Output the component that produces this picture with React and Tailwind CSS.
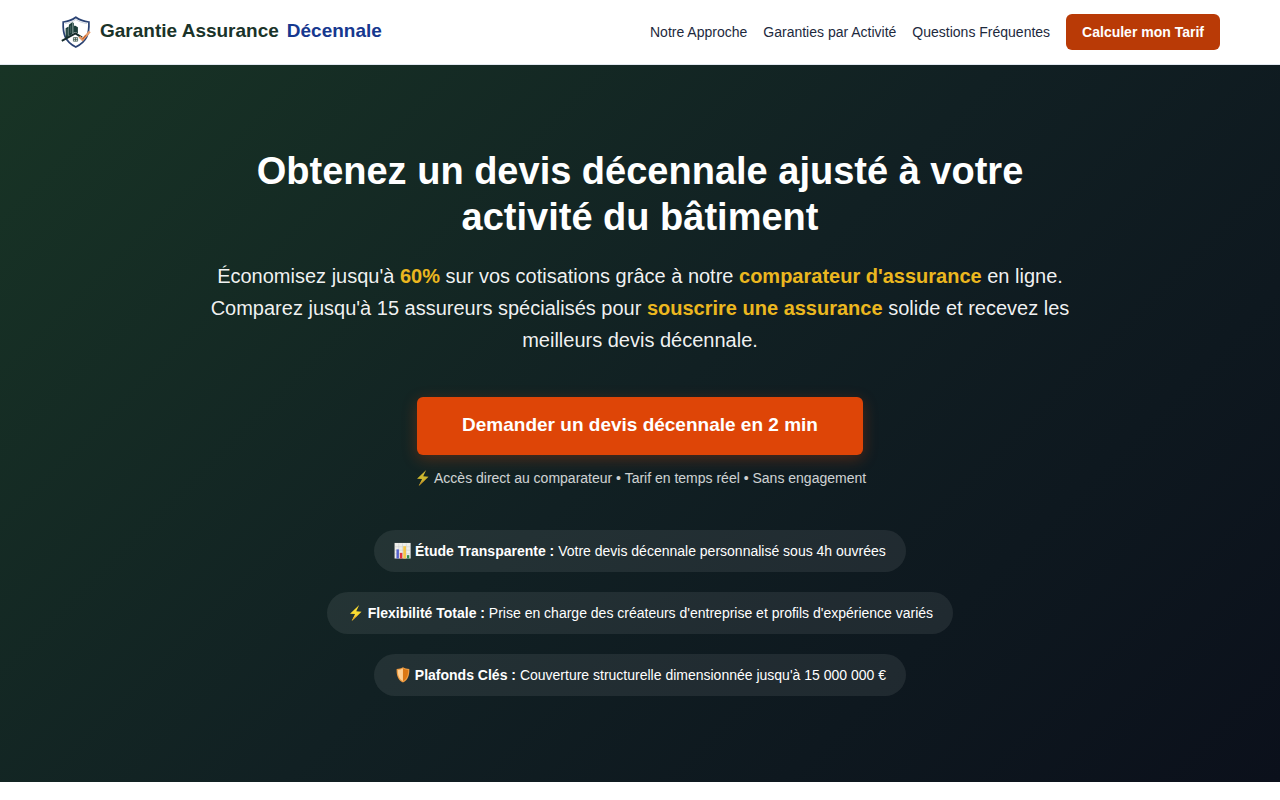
import React from "react";

const navLinks = [
  { label: "Notre Approche", href: "#approche" },
  { label: "Garanties par Activité", href: "#garanties" },
  { label: "Questions Fréquentes", href: "#faq" },
];

const Logo = () => (
  <svg viewBox="0 0 32 32" className="h-8 w-8" aria-hidden="true">
    {/* shield */}
    <path d="M15.800 1.300C12 4.200 8 5.600 3.200 6c-.3 7 .2 10.800 2 14.800 2 4.500 5.600 7.600 10.600 10.200 5-2.600 8.800-5.700 10.900-10.200 1.900-4 2.500-7.800 2.200-14.800C24 5.600 19.800 4.200 15.800 1.300Z" fill="#fff" stroke="#2a4273" strokeWidth="1.700" />
    <path d="M15.800 3.600C12.500 5.800 9 7 5.100 7.500M15.800 3.600c3.400 2.200 7 3.400 11.200 3.900" fill="none" stroke="#a9b7c8" strokeWidth="0.600" />
    {/* towers */}
    <path d="M5.600 12.300l3-1.700v9.600l-3 2ZM8.900 8.800l3.600-2.900v12l-3.600 2.200ZM13.300 10.800l1.600-1.300 3 1.800v6.100l-2.400-1.500-2.200 1.200Z" fill="#1b3d39" />
    <path d="M12.500 5.900l1.500 1.300v9l-1.500 1Z" fill="#45655f" />
    <path d="M7.100 13v6.500M10.700 9.500v7.500" stroke="#6b8781" strokeWidth="0.500" />
    {/* roof and window */}
    <path d="M1.800 24.800 15.400 17.400l6.800 4.300" fill="none" stroke="#142a29" strokeWidth="2" />
    <path d="M13.400 21.600h4.200v3.600h-4.200ZM15.500 21.600v3.600M13.400 23.400h4.200" fill="#e5e8de" stroke="#2c4b42" strokeWidth="0.700" />
    {/* check mark */}
    <path d="M19.300 20.700l3.200 3 7.300-8.200" fill="none" stroke="#e59a68" strokeWidth="2.400" />
    <path d="M22.500 23l3.300-3.700" stroke="#cc6329" strokeWidth="1.200" />
  </svg>
);

const ChartIcon = () => (
  <svg viewBox="0 0 18 18" className="-mt-1 inline-block size-[17px]" aria-hidden="true">
    <rect x="0.600" y="1" width="17" height="16.500" fill="#eeeeea" />
    <path d="M1 5h16M1 8.700h16M1 12.400h16M5 1.500v15M9 1.500v15M13 1.500v15" stroke="#c3c9c9" strokeWidth="0.500" />
    <rect x="2.600" y="7.800" width="2.600" height="9.700" fill="#5360cb" />
    <rect x="6.200" y="11.500" width="2.600" height="6" fill="#df3340" />
    <rect x="9.800" y="4.500" width="2.900" height="13" fill="#f6c648" />
    <rect x="13.700" y="13.900" width="2.500" height="3.600" fill="#338b51" />
  </svg>
);

const BoltIcon = () => (
  <svg viewBox="0 0 18 18" className="-mt-1 inline-block size-[17px]" aria-hidden="true">
    <path d="M12.900 1 3.200 10.200l5.300.5L5 18 15.400 8.100l-5.600-.5Z" fill="#fbdc32" />
    <path d="m8.500 10.700L5 18 15.400 8.100l-4.600 3.700-4 2.500Z" fill="#eda928" />
  </svg>
);

const ShieldIcon = () => (
  <svg viewBox="0 0 18 18" className="-mt-1 inline-block size-[17px]" aria-hidden="true">
    <path d="M9.500 1.300C7.500 2.500 5.500 3 2.800 3.200c-.3 6.500 1.200 11.500 6.700 14.300 5.500-2.800 7-7.800 6.700-14.300-2.700-.2-4.700-.7-6.700-1.900Z" fill="#ee9b41" />
    <path d="M9.500 2.700C7.900 3.600 6.100 4.100 4.100 4.300 4 9.700 5.300 13.700 9.500 16Z" fill="#ffcf91" />
    <path d="M9.500 2.700c1.600.9 3.400 1.400 5.400 1.600.1 5.400-1.200 9.400-5.400 11.700Z" fill="#dc7814" />
  </svg>
);

const highlights = [
  { Icon: ChartIcon, title: "Étude Transparente :", text: "Votre devis décennale personnalisé sous 4h ouvrées" },
  { Icon: BoltIcon, title: "Flexibilité Totale :", text: "Prise en charge des créateurs d'entreprise et profils d'expérience variés" },
  { Icon: ShieldIcon, title: "Plafonds Clés :", text: "Couverture structurelle dimensionnée jusqu'à 15 000 000 €" },
];

const Header = () => (
  <header className="border-b border-slate-200 bg-white">
    <div className="mx-auto flex h-16 max-w-[1200px] items-center justify-between px-5">
      <a href="#accueil" className="flex items-center gap-2">
        <Logo />
        <span className="pb-0.5 text-[19px] leading-7 font-bold text-[#1a3329]">Garantie Assurance</span>
        <span className="pb-0.5 text-[19px] leading-7 font-bold text-[#16388f]">Décennale</span>
      </a>
      <nav className="flex items-center gap-4 text-sm text-slate-800">
        {navLinks.map((link) => (
          <a key={link.href} href={link.href}>
            {link.label}
          </a>
        ))}
        <a href="#tarif" className="rounded-md bg-[#b93a06] px-4 py-2 font-bold text-white">
          Calculer mon Tarif
        </a>
      </nav>
    </div>
  </header>
);

const Hero = () => (
  <section className="bg-linear-[135deg,#183425_0%,#112023_50%,#0b101b_100%] px-5 pt-[83px] pb-[86px] text-center text-white">
    <div className="mx-auto flex max-w-[900px] flex-col items-center">
      <h1 className="text-[38px] leading-[46px] font-bold">
        Obtenez un devis décennale ajusté à votre activité du bâtiment
      </h1>
      <p className="mt-5 text-xl leading-8 text-white/95">
        Économisez jusqu'à <strong className="text-[#ebb71f]">60%</strong> sur vos cotisations grâce à notre{" "}
        <strong className="text-[#ebb71f]">comparateur d'assurance</strong> en ligne. Comparez jusqu'à 15 assureurs
        spécialisés pour <strong className="text-[#ebb71f]">souscrire une assurance</strong> solide et recevez les
        meilleurs devis décennale.
      </p>
      <a
        href="#devis"
        className="mt-[41px] rounded-md bg-[#de4507] px-[45px] pt-3.5 pb-4 text-[19px] leading-7 font-bold shadow-[0_4px_15px_rgba(222,69,7,0.3)]"
      >
        Demander un devis décennale en 2 min
      </a>
      <p className="mt-3 text-sm leading-[23px] opacity-80">
        <BoltIcon /> Accès direct au comparateur • Tarif en temps réel • Sans engagement
      </p>
      <ul className="mt-10 flex flex-col items-center gap-5">
        {highlights.map(({ Icon, title, text }) => (
          <li key={title} className="rounded-full bg-white/8 px-5 py-2.5 text-sm leading-[22px]">
            <Icon /> <strong>{title}</strong> {text}
          </li>
        ))}
      </ul>
    </div>
  </section>
);

export default function App() {
  return (
    <div className="min-h-screen bg-white font-['Liberation_Sans',Arial,sans-serif]">
      <Header />
      <main>
        <Hero />
      </main>
    </div>
  );
}
